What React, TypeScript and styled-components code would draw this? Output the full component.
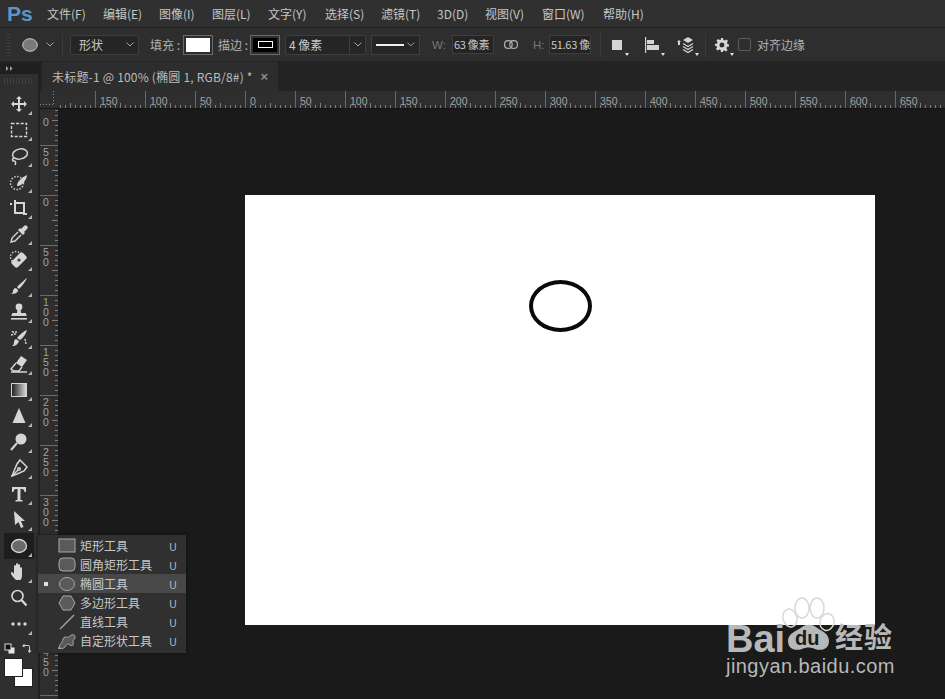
import { ReactNode } from "react";
import styled, { createGlobalStyle } from "styled-components";

const GlobalStyle = createGlobalStyle`
  html, body {
    margin: 0;
    padding: 0;
    background: #1a1a1a;
  }
  body {
    font-family: "Noto Sans CJK SC", "Noto Sans", sans-serif;
    font-size: 12px;
    color: #c4c4c4;
    overflow: hidden;
  }
`;

const MENU = [
  { label: "文件(F)", w: 40 },
  { label: "编辑(E)", w: 40 },
  { label: "图像(I)", w: 37 },
  { label: "图层(L)", w: 40 },
  { label: "文字(Y)", w: 41 },
  { label: "选择(S)", w: 40 },
  { label: "滤镜(T)", w: 40 },
  { label: "3D(D)", w: 32 },
  { label: "视图(V)", w: 41 },
  { label: "窗口(W)", w: 45 },
  { label: "帮助(H)", w: 43 },
];

const ICON = "#d6d6d6";

const TOOLS: { name: string; corner: boolean; icon: ReactNode }[] = [
  {
    name: "move",
    corner: true,
    icon: (
      <path
        fill={ICON}
        d="M10 2l3 3h-2v4h4V7l3 3-3 3v-2h-4v4h2l-3 3-3-3h2v-4H5v2l-3-3 3-3v2h4V5H7z"
      />
    ),
  },
  {
    name: "marquee",
    corner: true,
    icon: <rect x="2.5" y="3.5" width="15" height="13" fill="none" stroke={ICON} strokeWidth="1.4" strokeDasharray="3 1.6" />,
  },
  {
    name: "lasso",
    corner: true,
    icon: (
      <g fill="none" stroke={ICON} strokeWidth="1.5">
        <ellipse cx="11" cy="8" rx="7.5" ry="5" transform="rotate(-12 11 8)" />
        <path d="M5 12c-2 1-2 3 0 3s2 2 1 4" />
      </g>
    ),
  },
  {
    name: "quick",
    corner: true,
    icon: (
      <g>
        <circle cx="8" cy="11" r="6.5" fill="none" stroke={ICON} strokeWidth="1.4" strokeDasharray="1.5 1.5" />
        <path fill={ICON} d="M18 3c0 3-3 8-6 10-2 1-4 1-4 1s0-3 2-5c2-3 6-5 8-6z" />
      </g>
    ),
  },
  {
    name: "crop",
    corner: true,
    icon: (
      <path
        fill="none"
        stroke={ICON}
        strokeWidth="2"
        d="M1 5h2M6 1v3M6 4v10h10M6 4h9v9M15 13v3M15 15h3"
        transform="translate(0 1)"
      />
    ),
  },
  {
    name: "eyedropper",
    corner: true,
    icon: (
      <g>
        <path fill={ICON} d="M12 5l3-3c1-1 2-1 3 0s1 2 0 3l-3 3 1 1-2 2-5-5 2-2z" />
        <path fill="none" stroke={ICON} strokeWidth="1.4" d="M9 8l-6 6-1 4 4-1 6-6" />
      </g>
    ),
  },
  {
    name: "healing",
    corner: true,
    icon: (
      <g>
        <circle cx="7" cy="7" r="5.5" fill="none" stroke={ICON} strokeWidth="1.3" strokeDasharray="1.5 1.5" />
        <path fill={ICON} d="M14 3l3 3c1 1 1 2 0 3l-8 8c-1 1-2 1-3 0l-3-3c-1-1-1-2 0-3l8-8c1-1 2-1 3 0z" />
        <circle cx="10" cy="10" r="1.6" fill="#3a3a3a" />
      </g>
    ),
  },
  {
    name: "brush",
    corner: true,
    icon: (
      <g fill={ICON}>
        <path d="M18 2c-1 3-5 8-8 11l-2-2c3-3 7-7 10-9z" />
        <path d="M7 12l2 2c0 3-3 4-7 4 2-1 2-2 2-3s1-3 3-3z" />
      </g>
    ),
  },
  {
    name: "stamp",
    corner: true,
    icon: (
      <g fill={ICON}>
        <circle cx="10" cy="5" r="3.4" />
        <path d="M8.5 7h3l.5 4h4c1 0 1.5 1 1.5 3H2.500c0-2 .5-3 1.500-3h4z" />
        <rect x="2" y="16" width="16" height="1.6" />
      </g>
    ),
  },
  {
    name: "history",
    corner: true,
    icon: (
      <g>
        <path fill={ICON} d="M18 2c-1 4-4 8-7 10l-3-2c3-4 7-7 10-8z" />
        <path fill={ICON} d="M7 11l3 2c-1 3-3 5-7 5 2-1 2-3 2-4s1-3 2-3z" />
        <path fill="none" stroke={ICON} strokeWidth="1.500" d="M2 7l4-1-2-2h5M16 11l1 5" strokeDasharray="2 1" />
      </g>
    ),
  },
  {
    name: "eraser",
    corner: true,
    icon: (
      <g>
        <path fill={ICON} d="M12 2l6 4-5 7-6-4z" />
        <path fill="none" stroke={ICON} strokeWidth="1.400" d="M7 9l-5 6 3 2h5l3-4M2 18h16" />
      </g>
    ),
  },
  {
    name: "gradient",
    corner: true,
    icon: (
      <g>
        <defs>
          <linearGradient id="gradTool">
            <stop offset="0" stopColor="#1c1c1c" />
            <stop offset="1" stopColor="#dcdcdc" />
          </linearGradient>
        </defs>
        <rect x="2.500" y="3.500" width="15" height="13" fill="url(#gradTool)" stroke={ICON} />
      </g>
    ),
  },
  { name: "sharpen", corner: true, icon: <path fill={ICON} d="M10 2l6.500 15h-13z" /> },
  {
    name: "dodge",
    corner: true,
    icon: (
      <g>
        <circle cx="12" cy="7" r="5.500" fill={ICON} />
        <path fill="none" stroke={ICON} strokeWidth="2" d="M8 11l-6 7" />
      </g>
    ),
  },
  {
    name: "pen",
    corner: true,
    icon: (
      <g fill="none" stroke={ICON} strokeWidth="1.500">
        <path d="M11 2l7 7-3 4-7 3-5 2 2-5 3-7z" />
        <path d="M3 18l6-6" />
        <circle cx="10" cy="11" r="1.300" />
      </g>
    ),
  },
  {
    name: "type",
    corner: true,
    icon: <path fill={ICON} d="M3 3h14v5h-1.500c0-2-1-3-3-3h-1v11h2v1.500H6.500V16h2V5h-1c-2 0-3 1-3 3H3z" />,
  },
  { name: "select", corner: true, icon: <path fill={ICON} d="M5 1l11 10h-4l2.500 6-2.500 1-2.500-6L6 15z" /> },
  {
    name: "ellipse",
    corner: true,
    icon: <ellipse cx="10" cy="10" rx="7.500" ry="6.500" fill="#6a6a6a" stroke={ICON} strokeWidth="1.300" />,
  },
  {
    name: "hand",
    corner: true,
    icon: (
      <path
        fill={ICON}
        d="M7 18c-2-2-5-5-5-7s2-1 3 1V4c0-1 2-1 2 0v5-7c0-1 2-1 2 0v7-6c0-1 2-1 2 0v7-4c0-1 2-1 2 0v7c0 3-1 5-2 5z"
      />
    ),
  },
  {
    name: "zoom",
    corner: false,
    icon: (
      <g fill="none" stroke={ICON}>
        <circle cx="8.500" cy="8" r="5.500" strokeWidth="1.600" />
        <path d="M12.500 12l5 5.500" strokeWidth="2.400" />
      </g>
    ),
  },
  {
    name: "more",
    corner: true,
    icon: (
      <g fill={ICON}>
        <circle cx="4" cy="10" r="1.700" />
        <circle cx="10" cy="10" r="1.700" />
        <circle cx="16" cy="10" r="1.700" />
      </g>
    ),
  },
];

const SHAPE_STROKE = "#a8a8a8";
const SHAPE_FILL = "#5a5a5a";

const SHAPES: { label: string; icon: ReactNode; active?: boolean }[] = [
  { label: "矩形工具", icon: <rect x="1" y="2" width="16" height="13" fill={SHAPE_FILL} stroke={SHAPE_STROKE} /> },
  { label: "圆角矩形工具", icon: <rect x="1" y="2" width="16" height="13" rx="4" fill={SHAPE_FILL} stroke={SHAPE_STROKE} /> },
  { label: "椭圆工具", icon: <ellipse cx="9" cy="9" rx="7.500" ry="6.500" fill={SHAPE_FILL} stroke={SHAPE_STROKE} />, active: true },
  { label: "多边形工具", icon: <path d="M5 2h8l4 7-4 7H5L1 9z" fill={SHAPE_FILL} stroke={SHAPE_STROKE} /> },
  { label: "直线工具", icon: <path d="M2 16L16 2" fill="none" stroke={SHAPE_STROKE} strokeWidth="1.200" /> },
  {
    label: "自定形状工具",
    icon: (
      <path
        d="M2 16c-2-3 1-4 2-6s1-5 3-5 3 1 5-1 5-2 5 1-3 3-2 5 0 5-3 3-3 0-5 2-5 2-7 1z"
        fill={SHAPE_FILL}
        stroke={SHAPE_STROKE}
      />
    ),
  },
];

function range(from: number, to: number, step: number) {
  const out: number[] = [];
  for (let v = from; v <= to; v += step) out.push(v);
  return out;
}

// top ruler, x in page coordinates minus 58 (where the ruler starts)
function TopRuler() {
  const zero = 245 - 58;
  return (
    <svg width="887" height="17" style={{ display: "block" }}>
      {range(2, 887, 5).map((x) => {
        const d = x - zero;
        const h = d % 50 === 0 ? 17 : d % 25 === 0 ? 5 : 3;
        return <rect key={x} x={x} y={17 - h} width="1" height={h} fill={h === 17 ? "#6a6a6a" : "#7c7c7c"} />;
      })}
      {range(-150, 650, 50).map((v) => (
        <text key={v} x={zero + v + 5} y="14" fontSize="10.500" fill="#a2a2a2" fontFamily="Liberation Sans">
          {Math.abs(v)}
        </text>
      ))}
    </svg>
  );
}

// left ruler starts at y=109 on the page, the sheet's top edge is its zero
const SIDE_ZERO = 195 - 109;

function SideRuler() {
  return (
    <svg width="18" height="590" style={{ display: "block" }}>
      {range(1, 590, 5).map((y) => {
        const d = y - SIDE_ZERO;
        const major = d % 50 === 0;
        const w = major ? 18 : d % 25 === 0 ? 6 : 3;
        return <rect key={y} x={18 - w} y={y} width={w} height="1" fill={major ? "#6a6a6a" : "#7c7c7c"} />;
      })}
    </svg>
  );
}

const SIDE_LABELS = [
  { tick: 95, text: "0", row: 2 },
  { tick: 145, text: "50", row: 0 },
  { tick: 195, text: "0", row: 0 },
  { tick: 245, text: "50", row: 0 },
  { tick: 295, text: "100", row: 0 },
  { tick: 345, text: "150", row: 0 },
  { tick: 395, text: "200", row: 0 },
  { tick: 445, text: "250", row: 0 },
  { tick: 495, text: "300", row: 0 },
  { tick: 645, text: "450", row: 0 },
];

function Chevron({ color = "#a8a8a8" }: { color?: string }) {
  return (
    <svg width="8" height="5" viewBox="0 0 8 5">
      <path d="M.5.500L4 4 7.500.500" fill="none" stroke={color} />
    </svg>
  );
}

export default function App() {
  return (
    <Page>
      <GlobalStyle />
      <MenuBar>
        <Logo>Ps</Logo>
        {MENU.map((m) => (
          <MenuItem key={m.label} style={{ width: m.w }}>
            {m.label}
          </MenuItem>
        ))}
      </MenuBar>

      <OptionsBar>
        <Grip />
        <svg width="16" height="14" viewBox="0 0 16 14">
          <ellipse cx="8" cy="7" rx="7.300" ry="6.300" fill="#7a7a7a" stroke="#c8c8c8" />
        </svg>
        <ChevronSlot>
          <Chevron />
        </ChevronSlot>
        <Divider $left={8} $right={7} />
        <Select $w={69}>
          形状
          <Chevron />
        </Select>
        <OptLabel $left={11} $w={28}>
          填充 :
        </OptLabel>
        <Swatch $left={5}>
          <SwatchFill $color="#fff" />
        </Swatch>
        <OptLabel $left={5} $w={28}>
          描边 :
        </OptLabel>
        <Swatch $left={4}>
          <SwatchFill $color="#000">
            <StrokeMark />
          </SwatchFill>
        </Swatch>
        <Select $w={81} $left={5} $pad={3}>
          <span>4 像素</span>
          <SelectArrow>
            <Chevron />
          </SelectArrow>
        </Select>
        <LineSelect>
          <LineSample />
          <Chevron />
        </LineSelect>
        <DimLabel $left={12} $w={15}>
          W:
        </DimLabel>
        <NumberBox $left={5}>63 像素</NumberBox>
        <LinkIcon width="14" height="9" viewBox="0 0 14 9">
          <g fill="none" stroke="#b0b0b0" strokeWidth="1.200">
            <rect x=".6" y=".6" width="7.500" height="7.800" rx="3.500" />
            <rect x="5.900" y=".6" width="7.500" height="7.800" rx="3.500" />
          </g>
        </LinkIcon>
        <DimLabel $left={15} $w={12}>
          H:
        </DimLabel>
        <NumberBox $left={4}>51.63 像</NumberBox>
        <Divider $left={9} $right={11} />
        <OptIcon $w={12}>
          <svg width="12" height="12">
            <rect x="0" y="1" width="10" height="10" fill="#d4d4d4" />
          </svg>
        </OptIcon>
        <OptIcon $w={16} $left={20}>
          <svg width="16" height="16">
            <rect x="1" y="0" width="1.200" height="16" fill="#d4d4d4" />
            <rect x="3" y="3" width="7" height="4" fill="#d4d4d4" />
            <rect x="3" y="8" width="12" height="5" fill="#d4d4d4" />
          </svg>
        </OptIcon>
        <OptIcon $w={20} $left={14}>
          <svg width="20" height="18" viewBox="0 0 20 18">
            <g fill="#d4d4d4">
              <path d="M3 6l2-2 2 2H6v3H4V6z" />
              <path d="M14 1l5 3-5 3-5-3z" />
            </g>
            <path d="M9 7.500l5 3 5-3M9 10.500l5 3 5-3M9 13.500l5 3 5-3" fill="none" stroke="#d4d4d4" strokeWidth="1.200" />
          </svg>
        </OptIcon>
        <Divider $left={11} $right={9} />
        <OptIcon $w={14}>
          <svg width="14" height="14" viewBox="0 0 14 14">
            <path
              fill="#d8d8d8"
              fillRule="evenodd"
              d="M6 0h2l.4 2 1.400.6L11.500 1.500 13 3l-1.100 1.700.6 1.300 1.500.4v2l-2 .4-.6 1.400 1.100 1.700-1.500 1.500-1.700-1.100-1.300.6L8 14H6l-.4-2-1.400-.6-1.700 1.100L1 11l1.100-1.700-.6-1.300L0 8V6l2-.4.600-1.400L1.500 2.500 3 1l1.700 1.100L6 1.600zM7 4.500a2.500 2.500 0 100 5 2.500 2.500 0 000-5z"
            />
          </svg>
        </OptIcon>
        <CheckBox />
        <OptLabel $left={6}>对齐边缘</OptLabel>
      </OptionsBar>

      <Workspace>
        <ToolBar>
          <CollapseRow>
            <svg width="7" height="5" viewBox="0 0 7 5">
              <path d="M0 0l2.500 2.500L0 5zM4 0l2.500 2.500L4 5z" fill="#a0a0a0" />
            </svg>
          </CollapseRow>
          <ToolGrip />
          {TOOLS.map((t) => (
            <ToolButton key={t.name} $active={t.name === "ellipse"} $corner={t.corner}>
              <svg width="20" height="20" viewBox="0 0 20 20">
                {t.icon}
              </svg>
            </ToolButton>
          ))}
          <ColorTools>
            <svg width="12" height="12" viewBox="0 0 12 12">
              <rect x="4" y="4" width="7" height="7" fill="#e8e8e8" stroke="#333" />
              <rect x="1" y="1" width="6" height="6" fill="#111" stroke="#ddd" />
            </svg>
            <svg width="12" height="12" viewBox="0 0 12 12">
              <path d="M2 3l2.500-2.500V2H8a2 2 0 012 2v3.500h1.500L9.500 10 7.500 7.500H9V4a1 1 0 00-1-1H4.500v1.500z" fill="#d0d0d0" />
            </svg>
          </ColorTools>
          <ColorChips>
            <BackChip />
            <FrontChip />
          </ColorChips>
        </ToolBar>

        <DocArea>
          <TabRow>
            <Tab>
              <TabTitle>未标题-1 @ 100% (椭圆 1, RGB/8#) *</TabTitle>
              <TabClose>×</TabClose>
            </Tab>
          </TabRow>
          <TopRulerRow>
            <RulerCorner />
            <TopRuler />
          </TopRulerRow>
          <CanvasRow>
            <SideRulerCol>
              <SideRuler />
              {SIDE_LABELS.map((l) => (
                <SideLabel key={l.tick} style={{ top: l.tick - 109 + 2 + l.row * 10 }}>
                  {l.text}
                </SideLabel>
              ))}
            </SideRulerCol>
            <Canvas>
              <Sheet>
                <EllipseMark />
              </Sheet>
            </Canvas>
          </CanvasRow>
        </DocArea>
      </Workspace>

      <Flyout>
        {SHAPES.map((s) => (
          <FlyoutRow key={s.label} $active={s.active}>
            <Bullet $show={s.active} />
            <svg width="18" height="18" viewBox="0 0 18 18">
              {s.icon}
            </svg>
            <FlyoutLabel>{s.label}</FlyoutLabel>
            <FlyoutKey>U</FlyoutKey>
          </FlyoutRow>
        ))}
      </Flyout>

      <Watermark>
        <Paw width="60" height="58" viewBox="0 0 60 58">
          <g fill="none" stroke="#d8d8d8" strokeWidth="1.500">
            <ellipse cx="8" cy="22" rx="7" ry="9" transform="rotate(-15 8 22)" />
            <ellipse cx="20" cy="12" rx="7" ry="10" />
            <ellipse cx="35" cy="12" rx="7" ry="10" />
            <ellipse cx="45" cy="26" rx="7" ry="8.500" transform="rotate(15 45 26)" />
          </g>
          <path d="M6 45c0-8 9-10 14-14 4-3 10-3 14 0 5 4 13 6 13 14 0 9-9 10-14 8-5-2-8-2-13 0-5 2-14 1-14-8z" fill="#b8b8b8" />
        </Paw>
        <BaiText>Bai</BaiText>
        <DuText>du</DuText>
        <JingyanText>经验</JingyanText>
        <UrlText>jingyan.baidu.com</UrlText>
      </Watermark>
    </Page>
  );
}

const Page = styled.div`
  position: relative;
  width: 945px;
  height: 699px;
  overflow: hidden;
  background: #1a1a1a;
`;

const MenuBar = styled.div`
  height: 28px;
  display: flex;
  align-items: center;
  gap: 16px;
  background: #303030;
  border-bottom: 1px solid #222;
  box-sizing: border-box;
`;

const Logo = styled.div`
  width: 31px;
  padding-left: 7px;
  margin-right: -7px;
  font-family: "Liberation Sans", sans-serif;
  font-weight: bold;
  font-size: 21px;
  color: #5d95c6;
`;

const MenuItem = styled.div`
  white-space: nowrap;
  font-size: 12px;
  color: #c6c6c6;
`;

const OptionsBar = styled.div`
  height: 34px;
  display: flex;
  align-items: center;
  padding-left: 6px;
  box-sizing: border-box;
  background: #2e2e2e;
  border-bottom: 1px solid #262626;
`;

const Grip = styled.div`
  width: 5px;
  height: 22px;
  margin-right: 11px;
  opacity: 0.35;
  background: repeating-linear-gradient(0deg, #555 0 1px, transparent 1px 3px);
`;

const ChevronSlot = styled.div`
  display: flex;
  margin-left: 8px;
`;

const Divider = styled.div<{ $left: number; $right: number }>`
  width: 1px;
  height: 24px;
  background: #3a3a3a;
  margin: 0 ${(p) => p.$right}px 0 ${(p) => p.$left}px;
`;

const Select = styled.div<{ $w: number; $left?: number; $pad?: number }>`
  position: relative;
  width: ${(p) => p.$w}px;
  height: 20px;
  margin-left: ${(p) => p.$left ?? 0}px;
  padding: 0 4px 0 ${(p) => p.$pad ?? 8}px;
  box-sizing: border-box;
  display: flex;
  align-items: center;
  justify-content: space-between;
  background: #252525;
  border: 1px solid #3e3e3e;
  border-radius: 2px;
  color: #c8c8c8;
`;

const SelectArrow = styled.div`
  position: absolute;
  top: 0;
  bottom: 0;
  right: 0;
  width: 15px;
  display: flex;
  align-items: center;
  justify-content: center;
  border-left: 1px solid #3e3e3e;
`;

const OptLabel = styled.div<{ $left: number; $w?: number }>`
  width: ${(p) => (p.$w ? `${p.$w}px` : "auto")};
  margin-left: ${(p) => p.$left}px;
  white-space: nowrap;
  color: #b0b0b0;
`;

const DimLabel = styled.div<{ $left: number; $w: number }>`
  width: ${(p) => p.$w}px;
  margin-left: ${(p) => p.$left}px;
  font-family: "Liberation Sans", sans-serif;
  font-size: 11.500px;
  color: #777;
`;

const Swatch = styled.div<{ $left: number }>`
  width: 30px;
  height: 20px;
  margin-left: ${(p) => p.$left}px;
  padding: 2px;
  box-sizing: border-box;
  border: 1px solid #6a6a6a;
`;

const SwatchFill = styled.div<{ $color: string }>`
  width: 100%;
  height: 100%;
  display: flex;
  align-items: center;
  justify-content: center;
  background: ${(p) => p.$color};
`;

const StrokeMark = styled.div`
  width: 13px;
  height: 5px;
  border: 1px solid #fff;
`;

const LineSelect = styled.div`
  width: 49px;
  height: 20px;
  margin-left: 5px;
  padding: 0 4px;
  box-sizing: border-box;
  display: flex;
  align-items: center;
  gap: 3px;
  border: 1px solid #3e3e3e;
  background: #252525;
`;

const LineSample = styled.div`
  width: 30px;
  height: 2px;
  background: #f0f0f0;
`;

const NumberBox = styled.div<{ $left: number }>`
  width: 42px;
  height: 19px;
  margin-left: ${(p) => p.$left}px;
  padding-left: 1px;
  box-sizing: border-box;
  line-height: 17px;
  white-space: nowrap;
  overflow: hidden;
  font-size: 11px;
  letter-spacing: -0.3px;
  color: #c8c8c8;
  background: #242424;
  border: 1px solid #3e3e3e;
`;

const LinkIcon = styled.svg`
  margin-left: 10px;
`;

const OptIcon = styled.div<{ $w: number; $left?: number }>`
  position: relative;
  width: ${(p) => p.$w}px;
  height: 20px;
  margin-left: ${(p) => p.$left ?? 0}px;
  display: flex;
  align-items: center;
  justify-content: center;

  &::after {
    content: "";
    position: absolute;
    right: -5px;
    bottom: -3px;
    border: 2px solid transparent;
    border-top: 3px solid #e0e0e0;
  }
`;

const CheckBox = styled.div`
  width: 13px;
  height: 13px;
  margin-left: 9px;
  box-sizing: border-box;
  border: 1px solid #5c5c5c;
  border-radius: 2px;
`;

const Workspace = styled.div`
  display: flex;
  height: 637px;
`;

const ToolBar = styled.div`
  width: 40px;
  flex: none;
  display: flex;
  flex-direction: column;
  align-items: stretch;
  background: #2f2f2f;
  border-right: 2px solid #202020;
  box-sizing: border-box;
`;

const CollapseRow = styled.div`
  height: 12px;
  padding: 4px 0 0 6px;
  box-sizing: border-box;
  display: flex;
  background: #1f1f1f;
`;

const ToolGrip = styled.div`
  height: 15px;
  margin: 2px 4px 0;
  opacity: 0.3;
  background: repeating-linear-gradient(90deg, #666 0 1px, transparent 1px 3px) 0 2px / 100% 6px no-repeat;
`;

const ToolButton = styled.div<{ $active?: boolean; $corner?: boolean }>`
  position: relative;
  height: 26px;
  margin: 0 4px 0 4px;
  display: flex;
  align-items: center;
  justify-content: center;
  background: ${(p) => (p.$active ? "#1d1d1d" : "transparent")};

  &::after {
    content: "";
    display: ${(p) => (p.$corner ? "block" : "none")};
    position: absolute;
    right: 2px;
    bottom: 2px;
    border: 2px solid transparent;
    border-right-color: #b4b4b4;
    border-bottom-color: #b4b4b4;
  }
`;

const ColorTools = styled.div`
  display: flex;
  justify-content: space-between;
  padding: 6px 6px 0 4px;
`;

const ColorChips = styled.div`
  position: relative;
  height: 30px;
  margin-top: 3px;
`;

const FrontChip = styled.div`
  position: absolute;
  left: 4px;
  top: 0;
  width: 19px;
  height: 19px;
  box-sizing: border-box;
  background: #fff;
  border: 1px solid #222;
`;

const BackChip = styled.div`
  position: absolute;
  left: 14px;
  top: 10px;
  width: 19px;
  height: 19px;
  box-sizing: border-box;
  background: #fff;
  border: 1px solid #222;
`;

const DocArea = styled.div`
  flex: 1;
  display: flex;
  flex-direction: column;
  min-width: 0;
`;

const TabRow = styled.div`
  height: 29px;
  padding-left: 2px;
  display: flex;
  background: #232323;
`;

const Tab = styled.div`
  width: 236px;
  height: 29px;
  box-sizing: border-box;
  padding: 0 10px 0 10px;
  display: flex;
  align-items: center;
  justify-content: space-between;
  white-space: nowrap;
  font-size: 12px;
  color: #bcbcbc;
  background: #2d2d2d;
`;

const TabTitle = styled.span`
  letter-spacing: 0.2px;
`;

const TabClose = styled.span`
  font-family: "Liberation Sans", sans-serif;
  font-weight: bold;
  font-size: 13px;
  color: #8a8a8a;
`;

const TopRulerRow = styled.div`
  height: 17px;
  display: flex;
  background: #2e2e2e;
  border-bottom: 1px solid #141414;
  box-sizing: content-box;
`;

const RulerCorner = styled.div`
  width: 18px;
  flex: none;
  box-sizing: border-box;
  height: 17px;
  margin-top: 0;
  background:
    repeating-linear-gradient(0deg, #8a8a8a 0 1px, transparent 1px 3px) 13px 0 / 1px 13px no-repeat,
    repeating-linear-gradient(90deg, #8a8a8a 0 1px, transparent 1px 3px) 0 13px / 14px 1px no-repeat;
`;

const CanvasRow = styled.div`
  flex: 1;
  display: flex;
  min-height: 0;
`;

const SideRulerCol = styled.div`
  position: relative;
  width: 18px;
  flex: none;
  background: #2e2e2e;
`;

const SideLabel = styled.div`
  position: absolute;
  left: 3px;
  width: 7px;
  word-break: break-all;
  font-family: "Liberation Sans", sans-serif;
  font-size: 10.500px;
  line-height: 10px;
  color: #a2a2a2;
`;

const Canvas = styled.div`
  flex: 1;
  padding: 86px 0 0 187px;
  background: #1a1a1a;
`;

const Sheet = styled.div`
  position: relative;
  width: 630px;
  height: 430px;
  background: #fff;
`;

const EllipseMark = styled.div`
  position: absolute;
  left: 284px;
  top: 85px;
  width: 63px;
  height: 52px;
  box-sizing: border-box;
  border: 4px solid #0a0a0a;
  border-radius: 50%;
`;

const Flyout = styled.div`
  position: absolute;
  left: 38px;
  top: 535px;
  width: 148px;
  height: 118px;
  padding: 1px 0;
  box-sizing: border-box;
  background: #303030;
  box-shadow: 0 0 3px rgba(0, 0, 0, 0.6);
`;

const FlyoutRow = styled.div<{ $active?: boolean }>`
  height: 19px;
  padding-left: 5px;
  display: flex;
  align-items: center;
  background: ${(p) => (p.$active ? "#484848" : "transparent")};
`;

const Bullet = styled.div<{ $show?: boolean }>`
  width: 4px;
  height: 4px;
  margin: 0 10px 0 1px;
  background: ${(p) => (p.$show ? "#e0e0e0" : "transparent")};
`;

const FlyoutLabel = styled.div`
  width: 86px;
  margin-left: 4px;
  white-space: nowrap;
  font-size: 12px;
  color: #c8c8c8;
`;

const FlyoutKey = styled.div`
  margin-left: 3px;
  font-size: 11px;
  color: #b8b8b8;
`;

const Watermark = styled.div`
  position: absolute;
  left: 726px;
  top: 596px;
  width: 172px;
  height: 84px;
  color: #b8b8b8;
  pointer-events: none;
`;

const Paw = styled.svg`
  position: absolute;
  left: 56px;
  top: 0;
`;

const BaiText = styled.div`
  position: absolute;
  left: 0;
  top: 28px;
  font-family: "Liberation Sans", sans-serif;
  font-weight: bold;
  font-size: 38px;
  line-height: 30px;
`;

const DuText = styled.div`
  position: absolute;
  left: 69px;
  top: 30px;
  font-family: "Liberation Sans", sans-serif;
  font-weight: bold;
  font-size: 20px;
  line-height: 24px;
  color: #1a1a1a;
`;

const JingyanText = styled.div`
  position: absolute;
  left: 109px;
  top: 22px;
  font-weight: bold;
  font-size: 28px;
  line-height: 36px;
  letter-spacing: 1px;
`;

const UrlText = styled.div`
  position: absolute;
  left: 0;
  top: 58px;
  font-family: "Liberation Sans", sans-serif;
  font-size: 20px;
  line-height: 24px;
  letter-spacing: 0.450px;
`;
